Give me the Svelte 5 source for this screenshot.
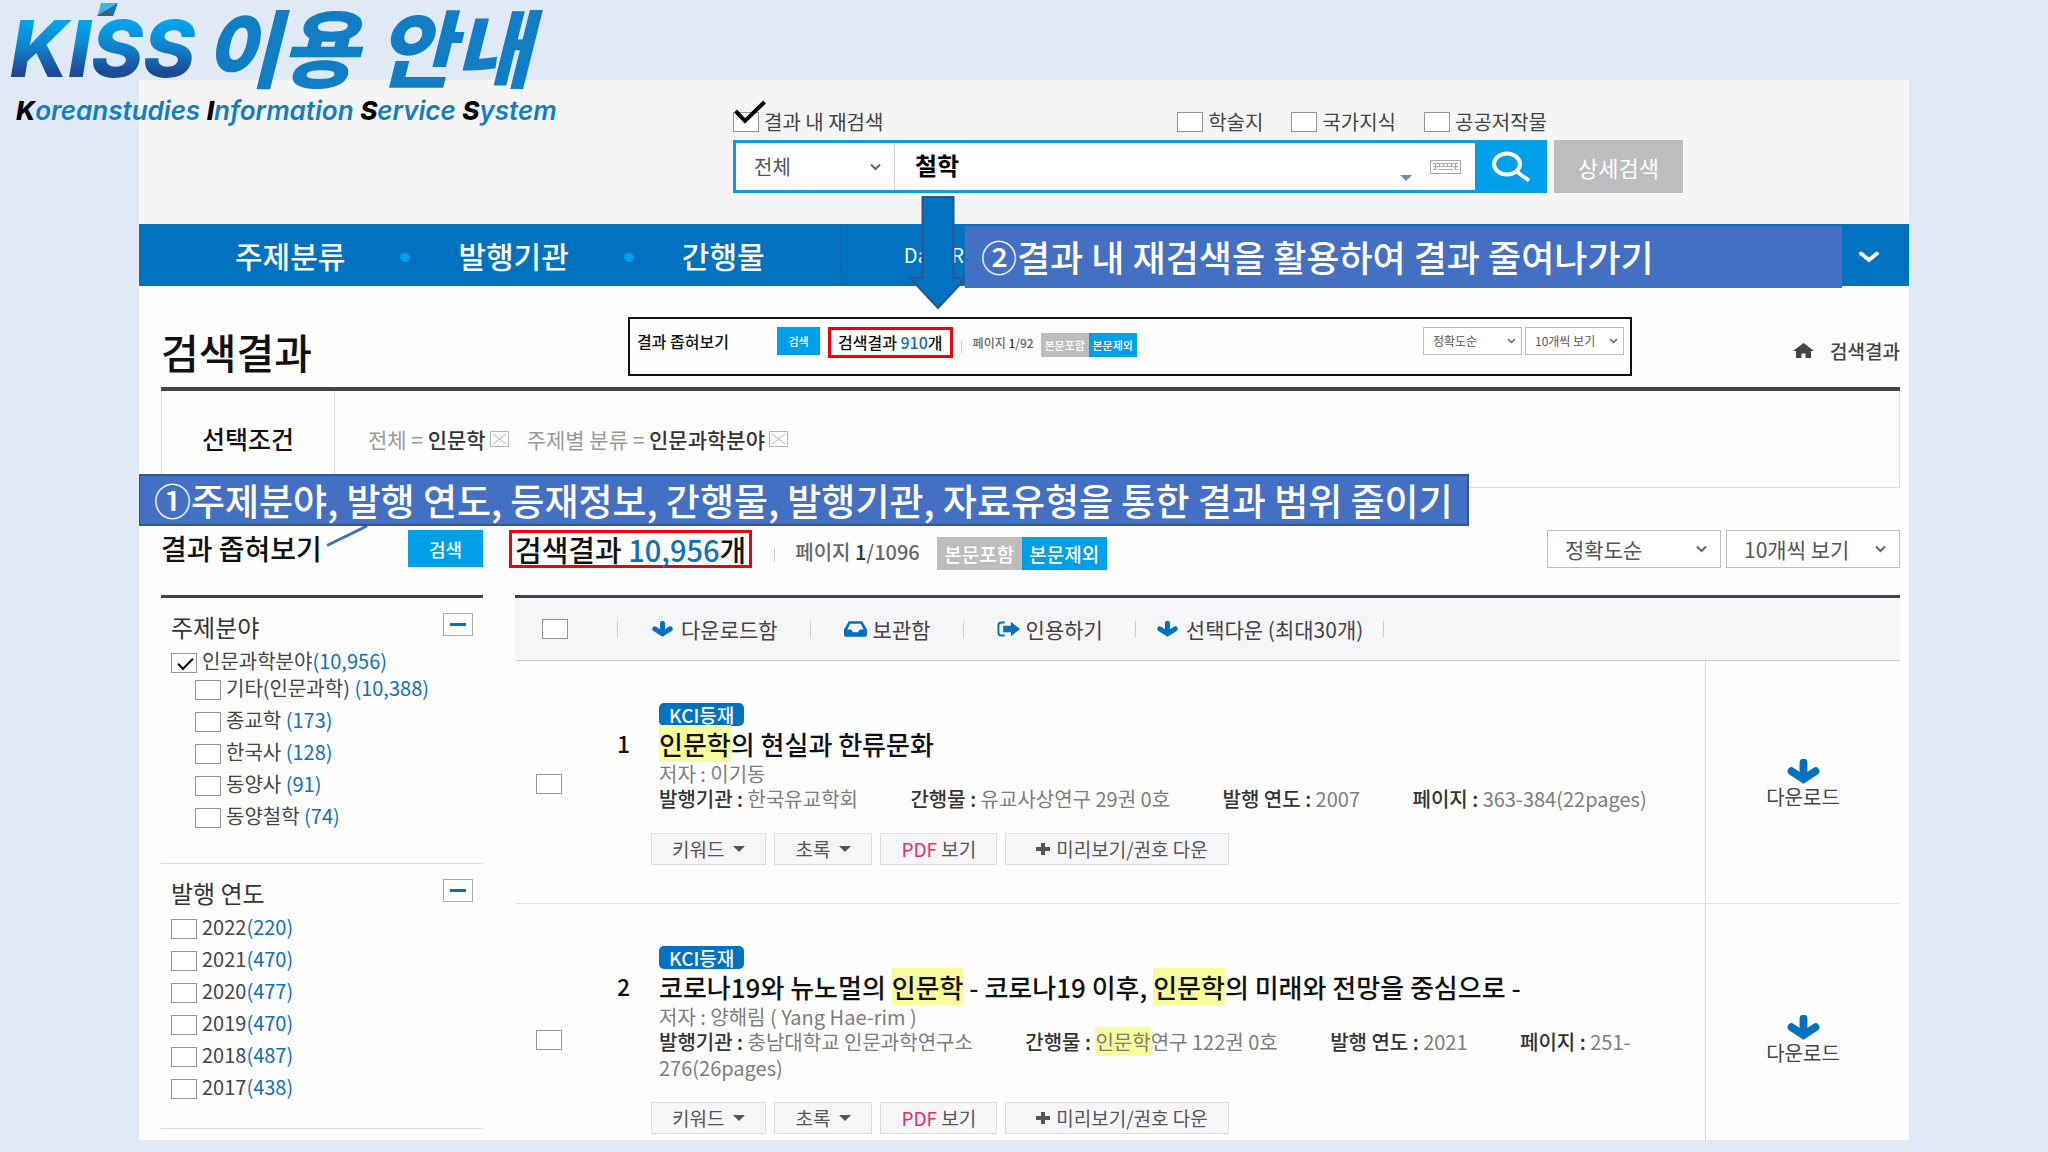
<script>
  const options = ['학술지', '국가지식', '공공저작물'];
  const subjects = [
    { name: '기타(인문과학)', count: '(10,388)' },
    { name: '종교학', count: '(173)' },
    { name: '한국사', count: '(128)' },
    { name: '동양사', count: '(91)' },
    { name: '동양철학', count: '(74)' },
  ];
  const years = [
    { name: '2022', count: '(220)' },
    { name: '2021', count: '(470)' },
    { name: '2020', count: '(477)' },
    { name: '2019', count: '(470)' },
    { name: '2018', count: '(487)' },
    { name: '2017', count: '(438)' },
  ];
  const keyword = '인문학';
  const results = [
    {
      title: '인문학의 현실과 한류문화',
      author: '이기동',
      meta: [
        ['발행기관', '한국유교학회'],
        ['간행물', '유교사상연구 29권 0호'],
        ['발행 연도', '2007'],
        ['페이지', '363-384(22pages)'],
      ],
    },
    {
      title: '코로나19와 뉴노멀의 인문학 - 코로나19 이후, 인문학의 미래와 전망을 중심으로 -',
      author: '양해림 ( Yang Hae-rim )',
      meta: [
        ['발행기관', '충남대학교 인문과학연구소'],
        ['간행물', '인문학연구 122권 0호'],
        ['발행 연도', '2021'],
        ['페이지', '251-276(26pages)'],
      ],
    },
  ];
  // Splits text around the keyword so that each hit can be highlighted.
  const parts = (text) => text.split(new RegExp(`(${keyword})`)).filter(Boolean);
</script>

{#snippet marked(text)}
  {#each parts(text) as part}{#if part === keyword}<mark>{part}</mark>{:else}{part}{/if}{/each}
{/snippet}

{#snippet chevron()}
  <svg class="chevron" viewBox="0 0 12 8" aria-hidden="true"><path d="M1.5 1.5L6 6l4.500-4.500" /></svg>
{/snippet}

{#snippet arrow()}
  <svg class="arrow-icon" viewBox="0 0 21 16" aria-hidden="true"><path d="M10.500 2.300v10M2.800 7.800l7.700 5 7.700-5" /></svg>
{/snippet}

{#snippet caret()}
  <svg class="caret" viewBox="0 0 12 6" aria-hidden="true"><path d="M0 0h12L6 6z" /></svg>
{/snippet}

{#snippet selects()}
  <div class="selects">
    <div class="select">
      <select aria-label="정렬"><option>정확도순</option></select>
      {@render chevron()}
    </div>
    <div class="select">
      <select aria-label="보기 개수"><option>10개씩 보기</option></select>
      {@render chevron()}
    </div>
  </div>
{/snippet}

<div class="slide">
  <div class="brand">
    <h1>
      <span class="kiss">KISS
        <svg class="gem" viewBox="0 0 22 14" aria-hidden="true">
          <path d="M4 0h18l-5 14H0z" fill="#3cb4e8" />
          <path d="M22 0L0 14h17z" fill="#1773b5" />
          <path d="M0 14l9-6 8 6z" fill="#55575c" />
        </svg>
      </span>
      <span class="guide">이용 안내</span>
    </h1>
    <p><b>K</b>oreanstudies <b>I</b>nformation <b>S</b>ervice <b>S</b>ystem</p>
  </div>

  <main class="panel">
    <header class="top">
      <div class="options">
        <label class="check">
          <input type="checkbox" />
          <span>결과 내 재검색</span>
          <svg class="tick" viewBox="0 0 34 26" aria-hidden="true"><path d="M2.500 11L12 21 31.500 2" /></svg>
        </label>
        <div class="scope">
          {#each options as option}
            <label class="check"><input type="checkbox" /><span>{option}</span></label>
          {/each}
        </div>
      </div>
      <div class="search-row">
        <form class="search">
          <div class="select field">
            <select aria-label="검색 필드"><option>전체</option></select>
            {@render chevron()}
          </div>
          <input class="query" type="text" value="철학" aria-label="검색어" />
          <svg class="suggest" viewBox="0 0 12 6" aria-hidden="true"><path d="M0 0h12L6 6z" /></svg>
          <svg class="keyboard" viewBox="0 0 31 14" aria-hidden="true">
            <path d="M.5.5h30v13H.5z" fill="none" />
            <path d="M3 3.500h25M3 6.500h25M3 9.500h3m2 0h15m2 0h3M5.500 3v7M9.500 3v4M13.500 3v4M17.500 3v4M21.500 3v4M25.500 3v7" />
          </svg>
          <button class="go" type="button" aria-label="검색">
            <svg viewBox="0 0 40 32" aria-hidden="true">
              <ellipse cx="16" cy="13" rx="13" ry="10.500" /><path d="M25.500 20.500L38 29.500" />
            </svg>
          </button>
        </form>
        <button class="detail" type="button">상세검색</button>
      </div>
    </header>

    <nav class="nav">
      <ul>
        <li><a href="#subject">주제분류</a></li>
        <li><a href="#publisher">발행기관</a></li>
        <li><a href="#journal">간행물</a></li>
      </ul>
      <a class="data" href="#data">Data R</a>
      <button class="more" type="button" aria-label="메뉴 펼치기">
        <svg viewBox="0 0 22 12" aria-hidden="true"><path d="M3 2.500l8 6.500 8-6.500" /></svg>
      </button>
      <p class="callout second">②결과 내 재검색을 활용하여 결과 줄여나가기</p>
    </nav>

    <svg class="pointer" viewBox="0 0 58 114" aria-hidden="true">
      <path d="M13.500 1h31v81H57L29 112 1 82h12.500z" />
    </svg>

    <div class="content">
      <div class="heading">
        <h2>검색결과</h2>
        <a class="crumb" href="#home">
          <svg viewBox="0 0 21 15" aria-hidden="true"><path d="M10.500 0L0 8h3v7h5.500v-4.500h4V15H18V8h3z" /></svg>
          검색결과
        </a>
        <section class="inset" aria-label="재검색 결과">
          <h3>결과 좁혀보기</h3>
          <button class="find" type="button">검색</button>
          <div class="summary">
            <p class="total">검색결과 <em>910</em>개</p>
            <i class="bar"></i>
            <p class="page">페이지 <b>1</b>/92</p>
            <div class="toggle"><button type="button">본문포함</button><button class="on" type="button">본문제외</button></div>
          </div>
          {@render selects()}
        </section>
      </div>

      <div class="conditions">
        <h3>선택조건</h3>
        <p>
          <span>전체 = <b>인문학</b></span>
          <button type="button" aria-label="인문학 조건 삭제"><svg viewBox="0 0 19 16" aria-hidden="true"><path d="M.5.5h18v15H.5zM3 3l13 10M16 3L3 13" /></svg></button>
          <span class="next">주제별 분류 = <b>인문과학분야</b></span>
          <button type="button" aria-label="인문과학분야 조건 삭제"><svg viewBox="0 0 19 16" aria-hidden="true"><path d="M.5.5h18v15H.5zM3 3l13 10M16 3L3 13" /></svg></button>
        </p>
        <div class="callout first">①주제분야, 발행 연도, 등재정보, 간행물, 발행기관, 자료유형을 통한 결과 범위 줄이기</div>
        <svg class="connector" viewBox="0 0 42 22" aria-hidden="true"><path d="M1 20.500L41 1" /></svg>
      </div>

      <div class="columns">
        <aside>
          <div class="side-head">
            <h3>결과 좁혀보기</h3>
            <button class="find" type="button">검색</button>
          </div>
          <section class="facet">
            <div class="facet-head">
              <h4>주제분야</h4>
              <button type="button" aria-label="주제분야 접기"><i></i></button>
            </div>
            <label class="check"><input type="checkbox" checked /><span>인문과학분야<em>(10,956)</em></span></label>
            <div class="group nested">
              {#each subjects as item}
                <label class="check"><input type="checkbox" /><span>{item.name} <em>{item.count}</em></span></label>
              {/each}
            </div>
          </section>
          <section class="facet years">
            <div class="facet-head">
              <h4>발행 연도</h4>
              <button type="button" aria-label="발행 연도 접기"><i></i></button>
            </div>
            <div class="group">
              {#each years as item}
                <label class="check"><input type="checkbox" /><span>{item.name}<em>{item.count}</em></span></label>
              {/each}
            </div>
          </section>
        </aside>

        <section class="results">
          <div class="result-head">
            <div class="summary">
              <p class="total">검색결과 <em>10,956</em>개</p>
              <i class="bar"></i>
              <p class="page">페이지 <b>1</b>/1096</p>
              <div class="toggle"><button type="button">본문포함</button><button class="on" type="button">본문제외</button></div>
            </div>
            {@render selects()}
          </div>

          <div class="toolbar">
            <input type="checkbox" aria-label="전체 선택" />
            <i class="bar"></i>
            <button type="button">{@render arrow()}다운로드함</button>
            <i class="bar"></i>
            <button class="tight" type="button">
              <svg viewBox="0 0 24 16" aria-hidden="true"><path d="M5 0h14l5 8.500V14q0 2-2 2H2q-2 0-2-2V8.500zM6.500 2.500L3.500 8.500h4l2 3h5l2-3h4l-3-6z" fill-rule="evenodd" /></svg>보관함
            </button>
            <i class="bar"></i>
            <button class="tight" type="button">
              <svg viewBox="0 0 24 16" aria-hidden="true"><path d="M8 1.200H4.500q-3 0-3 3v7.600q0 3 3 3H8" fill="none" stroke="#0072bf" stroke-width="2" /><path d="M6.500 4.500h8V.500l9.500 7.500-9.500 7.500v-4h-8z" /></svg>인용하기
            </button>
            <i class="bar"></i>
            <button class="last" type="button">{@render arrow()}선택다운 (최대30개)</button>
            <i class="bar"></i>
          </div>

          {#each results as result, i}
            <article>
              <input type="checkbox" aria-label="{i + 1}번 결과 선택" />
              <span class="number">{i + 1}</span>
              <div class="body">
                <span class="badge">KCI등재</span>
                <h4>{@render marked(result.title)}</h4>
                <p class="author">저자 : {result.author}</p>
                <p class="meta">
                  {#each result.meta as [name, value]}
                    <span class="item"><b>{name} :</b> {@render marked(value)}</span>{' '}
                  {/each}
                </p>
                <div class="actions">
                  <button type="button">키워드{@render caret()}</button>
                  <button type="button">초록{@render caret()}</button>
                  <button type="button"><span><em>PDF</em> 보기</span></button>
                  <button class="preview" type="button">
                    <svg viewBox="0 0 14 12" aria-hidden="true"><path d="M7 0v12M0 6h14" /></svg>미리보기/권호 다운
                  </button>
                </div>
              </div>
              <button class="download" type="button">{@render arrow()}다운로드</button>
            </article>
          {/each}
        </section>
      </div>
    </div>
  </main>
</div>

<style>
  :global(body) {
    background: #dfeaf6;
  }
  .slide,
  .slide :global(*) {
    box-sizing: border-box;
  }
  .slide {
    position: relative;
    display: flex;
    height: 100vh;
    padding: 80px 139px 12px;
    overflow: hidden;
    background: #dfeaf6;
    color: #444;
    font-family: 'Noto Sans CJK KR', 'Noto Sans', sans-serif;
    font-size: 20px;
    line-height: 26px;
  }
  h1, h2, h3, h4, p, ul {
    margin: 0;
    padding: 0;
    font-weight: 500;
  }
  em {
    color: #0f6fb9;
    font-style: normal;
  }
  a {
    color: inherit;
    text-decoration: none;
  }
  button, select, input {
    margin: 0;
    padding: 0;
    border: 0;
    border-radius: 0;
    color: inherit;
    font: inherit;
  }
  button {
    display: flex;
    align-items: center;
    justify-content: center;
    background: none;
    white-space: nowrap;
  }
  svg {
    display: block;
    flex: none;
  }
  mark {
    background: #f8fc9c;
    color: inherit;
  }
  input[type='checkbox'] {
    flex: none;
    appearance: none;
    width: 26px;
    height: 20px;
    border: 1px solid #959595;
    background: #fff;
  }

  /* Brand title over the top-left corner */
  .brand {
    position: absolute;
    z-index: 2;
    top: 0;
    left: 10px;
    color: #107dc5;
    white-space: nowrap;
  }
  .brand h1 {
    display: flex;
    align-items: flex-start;
    gap: 8px;
    height: 97px;
  }
  .kiss {
    position: relative;
    background: linear-gradient(#00a5ec 22px, #0e86cf 45px, #1c4a94 72px);
    background-clip: text;
    color: transparent;
    font: italic 800 79px/96px Inter, sans-serif;
  }
  .gem {
    position: absolute;
    top: 3px;
    left: 87px;
    width: 21px;
    height: 13px;
  }
  .guide {
    font-size: 84px;
    font-style: italic;
    font-weight: 900;
    line-height: 90px;
  }
  .brand p {
    padding-left: 6px;
    font: italic 600 26px/28px Inter, sans-serif;
  }
  .brand b {
    color: #000;
    font-weight: 800;
  }

  .panel {
    position: relative;
    flex: 1;
    min-width: 0;
    overflow: hidden;
    background: #fefefe;
  }

  /* Search header */
  .top {
    height: 144px;
    padding: 32px 226px 0 594px;
    background: #f5f5f6;
  }
  .options {
    display: flex;
    justify-content: space-between;
    height: 20px;
    margin: 0 136px 8px 0;
  }
  .check {
    position: relative;
    display: flex;
    align-items: center;
    gap: 5px;
    line-height: 18px;
    white-space: nowrap;
  }
  .scope {
    display: flex;
    gap: 28px;
  }
  .tick {
    position: absolute;
    top: -12px;
    left: 0;
    width: 34px;
    height: 26px;
    fill: none;
    stroke: #000;
    stroke-width: 4;
  }
  .search-row {
    display: flex;
    gap: 7px;
    height: 53px;
  }
  .search {
    display: flex;
    flex: 1;
    align-items: center;
    min-width: 0;
    border: 3px solid #0d9fe4;
    border-right: 0;
    background: #fff;
  }
  .select {
    display: grid;
    align-items: center;
    border: 1px solid #bfbfc2;
    background: #fff;
    color: #555;
  }
  .select > select,
  .select :global(.chevron) {
    grid-area: 1 / 1;
  }
  .select > select {
    width: 100%;
    height: 100%;
    appearance: none;
    background: none;
  }
  .chevron {
    justify-self: end;
    width: 13px;
    height: 8px;
    fill: none;
    stroke: #666;
    stroke-width: 2;
    pointer-events: none;
  }
  .field {
    flex: none;
    width: 159px;
    height: 100%;
    padding: 0 12px 0 18px;
    border: 0;
    border-right: 1px solid #ccc;
  }
  .query {
    flex: 1;
    min-width: 0;
    height: 100%;
    padding: 0 20px 4px;
    background: none;
    color: #000;
    font-size: 24px;
    font-weight: 700;
  }
  .suggest {
    align-self: flex-end;
    width: 12px;
    height: 6px;
    margin: 0 18px 9px 0;
    fill: #6f8fb5;
  }
  .keyboard {
    width: 31px;
    height: 14px;
    margin-right: 14px;
    stroke: #aaa;
  }
  .go {
    flex: none;
    width: 72px;
    height: 100%;
    background: #00a0e9;
  }
  .go svg {
    width: 40px;
    height: 32px;
    fill: none;
    stroke: #fff;
    stroke-width: 4;
  }
  .detail {
    flex: none;
    width: 129px;
    background: #bdbdbe;
    color: #fff;
    font-size: 22px;
  }

  /* Navigation */
  .nav {
    position: relative;
    display: flex;
    align-items: center;
    height: 62px;
    background: #0072bf;
    color: #fff;
  }
  .nav ul {
    display: flex;
    align-items: center;
    height: 100%;
    padding: 0 75px 0 96px;
    border-right: 1px solid #1066b4;
    list-style: none;
  }
  .nav li {
    display: flex;
    align-items: center;
    font-size: 30px;
    font-weight: 500;
    line-height: 36px;
  }
  .nav li + li::before {
    width: 10px;
    height: 9px;
    margin: 4px 48px 0 55px;
    border-radius: 50%;
    background: #00a0e9;
    content: '';
  }
  .data {
    margin-left: 63px;
  }
  .more {
    width: 67px;
    height: 100%;
    margin-left: auto;
    padding: 4px 14px 0 0;
  }
  .more svg {
    width: 22px;
    height: 12px;
    fill: none;
    stroke: #fff;
    stroke-width: 4;
    stroke-linecap: round;
  }
  .callout {
    position: absolute;
    z-index: 2;
    background: #4470c4;
    color: #fff;
    font-weight: 500;
    white-space: nowrap;
  }
  .second {
    top: 2px;
    right: 67px;
    left: 826px;
    height: 62px;
    padding-left: 16px;
    font-size: 36px;
    line-height: 60px;
  }
  .pointer {
    position: absolute;
    z-index: 1;
    top: 116px;
    left: 770px;
    width: 58px;
    height: 114px;
    fill: #0072bf;
    stroke: #2f5292;
    stroke-width: 2;
  }

  /* Page heading */
  .content {
    padding: 0 9px 0 22px;
  }
  .heading {
    position: relative;
    display: flex;
    align-items: center;
    justify-content: space-between;
    height: 105px;
    padding-top: 28px;
    border-bottom: 4px solid #454348;
  }
  .heading h2 {
    color: #111;
    font-size: 41px;
    line-height: 48px;
  }
  .crumb {
    display: flex;
    align-items: center;
    gap: 16px;
    font-size: 19px;
    font-weight: 500;
  }
  .crumb svg {
    width: 21px;
    height: 15px;
    fill: #444;
  }
  .inset {
    position: absolute;
    top: 31px;
    right: 268px;
    left: 467px;
    display: flex;
    align-items: flex-start;
    height: 59px;
    padding: 8px 6px 0 7px;
    border: 2px solid #111;
    background: #fefefe;
    font-size: 12px;
  }
  .inset h3 {
    width: 140px;
    color: #111;
    font-size: 16px;
    line-height: 28px;
  }
  .inset .find {
    width: 43px;
    height: 28px;
    margin-right: 8px;
    font-size: 11px;
  }
  .inset .total {
    padding: 0 7px;
    font-size: 16px;
    line-height: 25px;
  }
  .inset .bar {
    height: 12px;
    margin: 14px 11px 0 8px;
  }
  .inset .page {
    line-height: 32px;
  }
  .inset .toggle {
    margin: 6px 0 0 7px;
    font-size: 11px;
  }
  .inset .toggle button {
    width: 48px;
    height: 24px;
  }
  .inset :global(.selects) {
    gap: 3px;
  }
  .inset :global(.select) {
    width: 99px;
    height: 28px;
    padding: 0 5px 0 9px;
  }
  .inset :global(.chevron) {
    width: 9px;
    height: 6px;
  }

  /* Shared result summary */
  .find {
    background: #00a0e9;
    color: #fff;
    font-weight: 500;
  }
  .summary {
    display: flex;
    align-items: flex-start;
    white-space: nowrap;
  }
  .total {
    border: 3px solid #e8060c;
    color: #111;
  }
  .bar {
    width: 1px;
    background: #ccc;
  }
  .page {
    color: #666;
  }
  .page b {
    color: #333;
    font-weight: 500;
  }
  .toggle {
    display: flex;
    color: #fff;
    font-weight: 500;
  }
  .toggle button {
    background: #bdbdbe;
  }
  .toggle .on {
    background: #00a0e9;
  }
  .selects {
    display: flex;
    gap: 5px;
    margin-left: auto;
  }

  /* Selected conditions */
  .conditions {
    position: relative;
    display: flex;
    height: 97px;
    border: 1px solid #dedee2;
    border-top: 0;
  }
  .conditions h3 {
    width: 173px;
    border-right: 1px solid #dedee2;
    color: #111;
    font-size: 25px;
    line-height: 94px;
    text-align: center;
  }
  .conditions p {
    display: flex;
    align-items: center;
    gap: 4px;
    padding-left: 33px;
    color: #999;
    font-size: 21px;
    font-weight: 400;
  }
  .conditions b {
    color: #333;
    font-weight: 500;
  }
  .next {
    margin-left: 14px;
  }
  .conditions button svg {
    width: 19px;
    height: 16px;
    fill: none;
    stroke: #b5b5b8;
  }
  .first {
    top: 83px;
    left: -24px;
    padding: 0 14px;
    border: 2px solid #2f5597;
    font-size: 37px;
    line-height: 48px;
  }
  .connector {
    position: absolute;
    top: 134px;
    left: 164px;
    width: 42px;
    height: 22px;
    fill: none;
    stroke: #4470c4;
    stroke-width: 3;
  }

  /* Columns */
  .columns {
    display: grid;
    grid-template-columns: 322px minmax(0, 1fr);
    gap: 32px;
    padding-top: 42px;
  }
  .side-head,
  .result-head {
    display: flex;
    align-items: flex-start;
    justify-content: space-between;
    height: 68px;
    border-bottom: 3px solid #444;
  }
  .side-head h3 {
    color: #111;
    font-size: 28px;
    line-height: 36px;
  }
  .side-head .find {
    width: 75px;
    height: 37px;
    font-size: 18px;
  }
  .facet {
    padding: 15px 0 35px 10px;
    border-bottom: 1px solid #dedee2;
  }
  .years {
    padding-bottom: 29px;
  }
  .facet-head {
    display: flex;
    align-items: flex-start;
    justify-content: space-between;
    margin: 0 10px 12px 0;
  }
  .facet-head h4 {
    color: #333;
    font-size: 24px;
    font-weight: 400;
    line-height: 28px;
  }
  .facet-head button {
    width: 30px;
    height: 23px;
    border: 1px solid #aaa;
  }
  .facet-head i {
    width: 16px;
    height: 3px;
    background: #0072bf;
  }
  .facet .check {
    align-items: flex-start;
    line-height: 15px;
  }
  .facet input:checked {
    background: #fff;
  }
  .facet input:checked::before {
    display: block;
    width: 13px;
    height: 6px;
    margin: 4px 6px;
    border: solid #000;
    border-width: 0 0 2px 2px;
    content: '';
    transform: rotate(-45deg);
  }
  .group {
    display: grid;
    gap: 12px;
  }
  .nested {
    padding: 7px 0 0 24px;
  }

  .result-head .summary {
    margin-left: -6px;
  }
  .result-head .total {
    padding: 0 3px;
    font-size: 29px;
    line-height: 32px;
  }
  .result-head .bar {
    height: 15px;
    margin: 17px 20px 0 22px;
  }
  .result-head .page {
    line-height: 44px;
  }
  .result-head .toggle {
    margin: 7px 0 0 17px;
    font-size: 19px;
  }
  .result-head .toggle button {
    width: 85px;
    height: 33px;
  }
  .result-head :global(.select) {
    width: 174px;
    height: 38px;
    padding: 0 12px 0 17px;
    font-size: 21px;
  }

  .toolbar {
    display: flex;
    align-items: center;
    height: 63px;
    padding-left: 27px;
    border-bottom: 1px solid #cfcdd2;
    background: #f6f5f8;
  }
  .toolbar input {
    margin-right: 49px;
  }
  .toolbar .bar {
    height: 16px;
  }
  .toolbar button {
    gap: 7px;
    margin: 0 32px 0 33px;
    font-size: 21px;
  }
  .toolbar .tight {
    gap: 6px;
  }
  .toolbar .last {
    margin: 0 20px;
  }
  .toolbar button > svg {
    width: 23px;
    height: 16px;
    fill: #0072bf;
  }
  .arrow-icon {
    width: 21px;
    height: 16px;
  }
  .arrow-icon path {
    fill: none;
    stroke: #0072bf;
    stroke-width: 5;
    stroke-linecap: round;
  }

  /* Result rows */
  article {
    display: grid;
    grid-template-columns: 26px 77px minmax(0, 1fr) 195px;
    align-items: center;
    padding-left: 21px;
    border-bottom: 1px solid #e4e2e8;
  }
  article > input[type='checkbox'] {
    margin-top: 3px;
  }
  .number {
    align-self: start;
    padding: 67px 0 0 55px;
    color: #111;
    font-size: 23px;
    font-weight: 500;
    line-height: 31px;
  }
  .body {
    padding: 42px 25px 38px 20px;
  }
  .badge {
    display: block;
    width: max-content;
    padding: 0 10px;
    border-radius: 5px;
    background: #0072bf;
    color: #fff;
    font-size: 19px;
    font-weight: 500;
    line-height: 23px;
  }
  .body h4 {
    margin: 2px 0;
    color: #111;
    font-size: 26px;
    line-height: 31px;
    white-space: nowrap;
  }
  .author {
    color: #7c7c7c;
    font-weight: 400;
    line-height: 25px;
  }
  .meta {
    color: #7c7c7c;
    font-weight: 400;
  }
  .meta b {
    color: #333;
    font-weight: 500;
  }
  .item:not(:last-child) {
    margin-right: 48px;
  }
  .actions {
    display: flex;
    gap: 8px;
    margin: 21px 0 0 -8px;
    color: #555;
    font-size: 19px;
  }
  .actions button {
    gap: 9px;
    height: 32px;
    padding: 0 20px;
    border: 1px solid #dddce0;
    background: #f6f6f8;
  }
  .actions em {
    color: #e5335f;
  }
  .actions .preview {
    gap: 6px;
    padding-left: 30px;
  }
  .preview svg {
    width: 14px;
    height: 12px;
    stroke: #555;
    stroke-width: 4;
  }
  .caret {
    width: 12px;
    height: 6px;
    fill: #555;
  }
  .download {
    flex-direction: column;
    align-self: stretch;
    padding-top: 4px;
    border-left: 1px solid #d8d6dc;
  }
  .download :global(.arrow-icon) {
    width: 33px;
    height: 25px;
  }
</style>
